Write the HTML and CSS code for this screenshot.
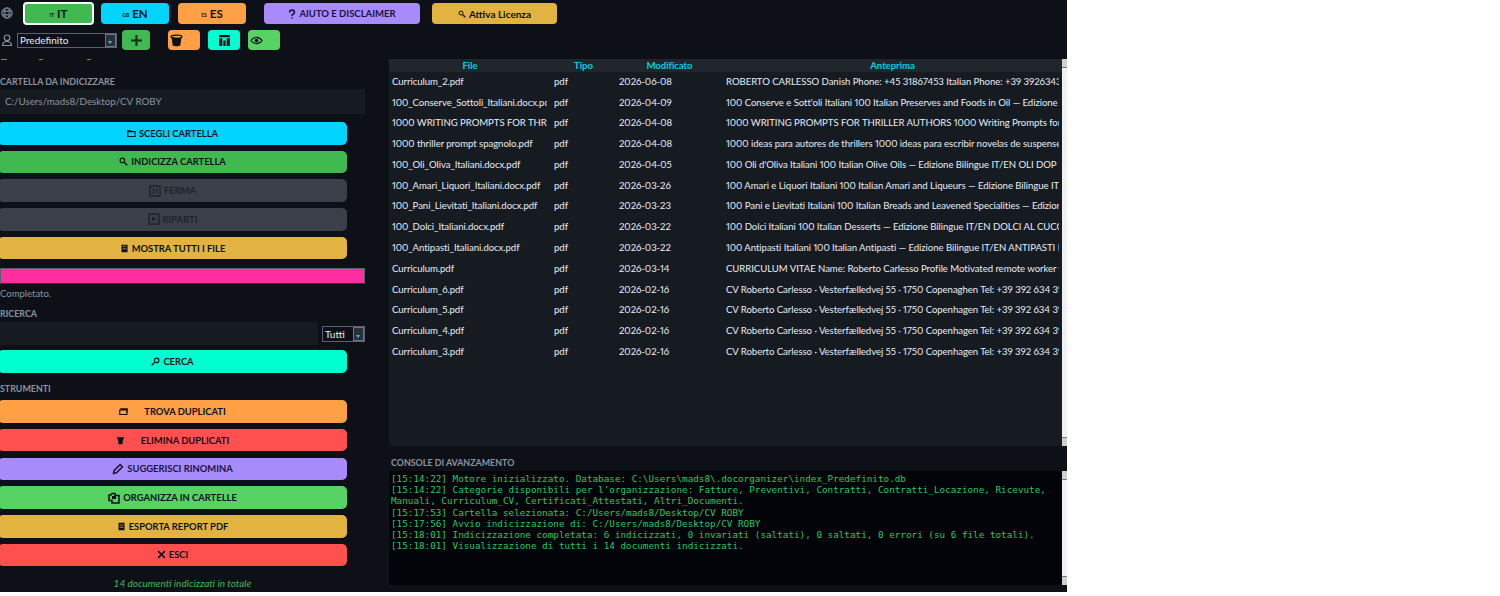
FILE: index.html
```html
<!DOCTYPE html>
<html lang="en">
<head>
    <meta charset="UTF-8">
    <meta name="viewport" content="width=device-width, initial-scale=1.0">
    <title>Doc Organizer</title>
    <link rel="stylesheet" href="styles.css">
</head>
<body>
    <div class="app">
        <div class="langbar">
            <svg class="side-icon globe" viewBox="0 0 12 12"><circle cx="6" cy="6" r="5"/><ellipse cx="6" cy="6" rx="2.4" ry="5"/><path d="M1 4.2h10M1 7.8h10"/></svg>
            <button class="top-btn lang active"><small>IT</small> IT</button>
            <button class="top-btn lang cyan en"><small>GB</small> EN</button>
            <button class="top-btn lang orange es"><small>ES</small> ES</button>
            <button class="top-btn purple help"><svg class="ico" viewBox="0 0 10 12"><path class="thick" d="M2 4c0-4 6-4 6 0 0 2-3 2-3 4.500"/><path class="thick" d="M5 10v1.500"/></svg> AIUTO E DISCLAIMER</button>
            <button class="top-btn yellow license"><svg class="ico" viewBox="0 0 12 12"><circle cx="4.500" cy="4.500" r="3"/><path class="thick" d="M7 7l4 4"/></svg> Attiva Licenza</button>
        </div>

        <div class="profilebar">
            <svg class="side-icon" viewBox="0 0 12 12"><circle cx="6" cy="3.800" r="2.800"/><path d="M1.500 11.500c0-3 2-4 4.500-4s4.500 1 4.500 4z"/></svg>
            <div class="select profile"><span>Predefinito</span><i></i></div>
            <button class="tool-btn green add"><svg viewBox="0 0 12 12"><path class="thick" d="M6 1v10M1 6h10"/></svg></button>
            <button class="tool-btn orange trash"><svg viewBox="0 0 12 12"><ellipse cx="6" cy="2.500" rx="5" ry="1.500"/><path class="fill" d="M1.500 3.500h9l-1 7c-1 1-6 1-7 0z"/></svg></button>
            <button class="tool-btn teal chart"><svg viewBox="0 0 12 12"><path class="fill" d="M1 1h10v2h-10zM1 4h3v7h-3zM5 6h2v5h-2zM8 4h3v7h-3z"/></svg></button>
            <button class="tool-btn green2 eye"><svg viewBox="0 0 14 10"><path d="M1 5c3-4.500 9-4.500 12 0-3 4.500-9 4.500-12 0z"/><circle class="fill" cx="7" cy="5" r="2"/></svg></button>
        </div>

        <div class="main">
            <div class="sidebar">
                <div class="dashes"><i></i><i></i><i></i></div>
                <h4 class="first">CARTELLA DA INDICIZZARE</h4>
                <div class="field path">C:/Users/mads8/Desktop/CV ROBY</div>

                <div class="actions folder-actions">
                    <button class="btn cyan"><svg class="ico" viewBox="0 0 12 10"><path d="M1 2.500h10v6.500h-10zM1 2.500v-1h4v1"/></svg> SCEGLI CARTELLA</button>
                    <button class="btn green"><svg class="ico" viewBox="0 0 12 12"><circle cx="4.500" cy="4.500" r="3"/><path class="thick" d="M7 7l4 4"/></svg> INDICIZZA CARTELLA</button>
                    <button class="btn off"><svg class="ico big" viewBox="0 0 12 12"><path d="M1 1h10v10h-10zM4.500 3.500v5M7.500 3.500v5"/></svg> FERMA</button>
                    <button class="btn off"><svg class="ico big" viewBox="0 0 12 12"><path d="M1 1h10v10h-10z"/><path class="fill" d="M4 3.500l4.500 2.500-4.500 2.500z"/></svg> RIPARTI</button>
                    <button class="btn yellow"><svg class="ico" viewBox="0 0 10 12"><path class="fill" d="M1 1h8v10h-8z"/><path class="light" d="M3 3h4M2.500 6.500h5"/></svg> MOSTRA TUTTI I FILE</button>
                </div>

                <div class="progress"></div>
                <p class="status">Completato.</p>

                <h4 class="search-title">RICERCA</h4>
                <div class="search-row">
                    <div class="field search"></div>
                    <div class="select filter"><span>Tutti</span><i></i></div>
                </div>
                <button class="btn teal single"><svg class="ico" viewBox="0 0 12 12"><circle cx="7.500" cy="4.500" r="3"/><path class="thick" d="M5 7l-4 4"/></svg> CERCA</button>

                <h4 class="tools-title">STRUMENTI</h4>
                <div class="actions">
                    <button class="btn orange wide"><svg class="ico" viewBox="0 0 12 10"><path d="M1 3h9.500v6h-9.500zM2.500 3v-1.500h8.500v5"/></svg> <span>TROVA DUPLICATI</span></button>
                    <button class="btn red wide"><svg class="ico" viewBox="0 0 12 12"><path class="fill" d="M1.500 1.500h9v2.500h-1l-1 7h-5l-1-7h-1z"/></svg> <span>ELIMINA DUPLICATI</span></button>
                    <button class="btn purple violet-text"><svg class="ico big" viewBox="0 0 12 12"><path d="M1.500 10.500l.7-3 6-6 2.300 2.300-6 6z"/></svg> SUGGERISCI RINOMINA</button>
                    <button class="btn green2"><svg class="ico big" viewBox="0 0 12 12"><path d="M1 3h2l1-1.500h3v2h4v7.500h-7v-2.500h-3z"/><path class="fill" d="M4 4h4v3h-4z"/></svg> ORGANIZZA IN CARTELLE</button>
                    <button class="btn yellow"><svg class="ico" viewBox="0 0 10 12"><path class="fill" d="M1 1h8v10h-8z"/><path class="light" d="M2.500 4h5M2.500 7h5"/></svg> ESPORTA REPORT PDF</button>
                    <button class="btn red"><svg class="ico" viewBox="0 0 12 12"><path class="thick" d="M1.500 1.500l9 9M10.500 1.500l-9 9"/></svg> ESCI</button>
                </div>
                <p class="total">14 documenti indicizzati in totale</p>
            </div>

            <div class="content">
                <div class="table-wrap">
                    <div class="table-scroll">
                        <table>
                            <colgroup><col class="c-file"><col class="c-type"><col class="c-date"><col></colgroup>
                            <thead>
                                <tr><th>File</th><th>Tipo</th><th>Modificato</th><th>Anteprima</th></tr>
                            </thead>
                            <tbody>
                                <tr><td><div>Curriculum_2.pdf</div></td><td>pdf</td><td>2026-06-08</td><td><div>ROBERTO CARLESSO Danish Phone: +45 31867453 Italian Phone: +39 392634391</div></td></tr>
                                <tr><td><div>100_Conserve_Sottoli_Italiani.docx.pdf</div></td><td>pdf</td><td>2026-04-09</td><td><div>100 Conserve e Sott'oli Italiani 100 Italian Preserves and Foods in Oil — Edizione Bilingue</div></td></tr>
                                <tr><td><div>1000 WRITING PROMPTS FOR THRILLER</div></td><td>pdf</td><td>2026-04-08</td><td><div>1000 WRITING PROMPTS FOR THRILLER AUTHORS 1000 Writing Prompts for Thriller</div></td></tr>
                                <tr><td><div>1000 thriller prompt spagnolo.pdf</div></td><td>pdf</td><td>2026-04-08</td><td><div>1000 ideas para autores de thrillers 1000 ideas para escribir novelas de suspense</div></td></tr>
                                <tr><td><div>100_Oli_Oliva_Italiani.docx.pdf</div></td><td>pdf</td><td>2026-04-05</td><td><div>100 Oli d'Oliva Italiani 100 Italian Olive Oils — Edizione Bilingue IT/EN OLI DOP IGP</div></td></tr>
                                <tr><td><div>100_Amari_Liquori_Italiani.docx.pdf</div></td><td>pdf</td><td>2026-03-26</td><td><div>100 Amari e Liquori Italiani 100 Italian Amari and Liqueurs — Edizione Bilingue IT/EN</div></td></tr>
                                <tr><td><div>100_Pani_Lievitati_Italiani.docx.pdf</div></td><td>pdf</td><td>2026-03-23</td><td><div>100 Pani e Lievitati Italiani 100 Italian Breads and Leavened Specialities — Edizione</div></td></tr>
                                <tr><td><div>100_Dolci_Italiani.docx.pdf</div></td><td>pdf</td><td>2026-03-22</td><td><div>100 Dolci Italiani 100 Italian Desserts — Edizione Bilingue IT/EN DOLCI AL CUCCHIAIO</div></td></tr>
                                <tr><td><div>100_Antipasti_Italiani.docx.pdf</div></td><td>pdf</td><td>2026-03-22</td><td><div>100 Antipasti Italiani 100 Italian Antipasti — Edizione Bilingue IT/EN ANTIPASTI DI</div></td></tr>
                                <tr><td><div>Curriculum.pdf</div></td><td>pdf</td><td>2026-03-14</td><td><div>CURRICULUM VITAE Name: Roberto Carlesso Profile Motivated remote worker with</div></td></tr>
                                <tr><td><div>Curriculum_6.pdf</div></td><td>pdf</td><td>2026-02-16</td><td><div>CV Roberto Carlesso · Vesterfælledvej 55 · 1750 Copenaghen Tel: +39 392 634 391</div></td></tr>
                                <tr><td><div>Curriculum_5.pdf</div></td><td>pdf</td><td>2026-02-16</td><td><div>CV Roberto Carlesso · Vesterfælledvej 55 · 1750 Copenhagen Tel: +39 392 634 391</div></td></tr>
                                <tr><td><div>Curriculum_4.pdf</div></td><td>pdf</td><td>2026-02-16</td><td><div>CV Roberto Carlesso · Vesterfælledvej 55 · 1750 Copenhagen Tel: +39 392 634 391</div></td></tr>
                                <tr><td><div>Curriculum_3.pdf</div></td><td>pdf</td><td>2026-02-16</td><td><div>CV Roberto Carlesso · Vesterfælledvej 55 · 1750 Copenhagen Tel: +39 392 634 391</div></td></tr>
                            </tbody>
                        </table>
                    </div>
                    <div class="scrollbar"><b></b><u></u><b></b></div>
                </div>

                <h4 class="console-title">CONSOLE DI AVANZAMENTO</h4>
                <div class="console-wrap">
                    <pre class="console">[15:14:22] Motore inizializzato. Database: C:\Users\mads8\.docorganizer\index_Predefinito.db
[15:14:22] Categorie disponibili per l'organizzazione: Fatture, Preventivi, Contratti, Contratti_Locazione, Ricevute,
Manuali, Curriculum_CV, Certificati_Attestati, Altri_Documenti.
[15:17:53] Cartella selezionata: C:/Users/mads8/Desktop/CV ROBY
[15:17:56] Avvio indicizzazione di: C:/Users/mads8/Desktop/CV ROBY
[15:18:01] Indicizzazione completata: 6 indicizzati, 0 invariati (saltati), 0 saltati, 0 errori (su 6 file totali).
[15:18:01] Visualizzazione di tutti i 14 documenti indicizzati.</pre>
                    <div class="scrollbar"><b></b><u></u><b></b></div>
                </div>
            </div>
        </div>
    </div>
</body>
</html>
```

FILE: styles.css
```css
* {
    box-sizing: border-box;
}
body {
    margin: 0;
    background: white;
    font-family: 'Lato', sans-serif;
    font-size: 10px;
    color: #c9d1d9;
}
button {
    font-family: inherit;
    cursor: pointer;
}
.app {
    width: 1067px;
    height: 592px;
    background: #0d1017;
    overflow: hidden;
    display: flex;
    flex-direction: column;
}

/* svg icons */
svg {
    fill: none;
    stroke: currentColor;
    stroke-width: 1.2;
    display: block;
    flex: none;
}
svg .thick {
    stroke-width: 2;
}
svg .fill {
    fill: currentColor;
    stroke: none;
}
svg .light {
    stroke: #e3b341;
    stroke-width: 1;
}
.ico {
    width: 9px;
    height: 9px;
    stroke-width: 1.5;
}
.ico.big {
    width: 12px;
    height: 12px;
}
.side-icon {
    width: 12px;
    height: 12px;
    color: #8b949e;
    margin-left: 1px;
}
.side-icon.globe {
    color: #6b7280;
    stroke-width: 1.6;
}

/* colours */
.cyan { background: #00d4ff; }
.green { background: #3fb950; }
.green2 { background: #56d364; }
.orange { background: #ffa044; }
.purple { background: #a78bfa; }
.yellow { background: #e3b341; }
.teal { background: #00ffd0; }
.red { background: #ff5050; }

/* top rows */
.langbar {
    height: 28px;
    padding-top: 3px;
    display: flex;
    align-items: flex-start;
}
.langbar .side-icon {
    margin-top: 4px;
}
.top-btn {
    height: 21px;
    border: none;
    border-radius: 4px;
    color: #0d1117;
    font-size: 9.500px;
    font-weight: 700;
    display: flex;
    align-items: center;
    justify-content: center;
    gap: 3px;
    padding: 0;
}
.top-btn small {
    font-size: 5px;
    margin-top: 3px;
}
.lang {
    width: 68px;
    font-size: 11.500px;
}
.lang.active {
    width: 71px;
    height: 23px;
    margin: -1px 0 0 10px;
    background: #3fb950;
    border: 2px solid #fff;
}
.en {
    margin-left: 7px;
}
.es {
    margin-left: 9px;
}
.help {
    width: 156px;
    margin-left: 18px;
    color: #1a1240;
}
.license {
    width: 125px;
    margin-left: 12px;
    font-size: 10px;
}
.help .ico, .license .ico {
    width: 8px;
    height: 10px;
}

.profilebar {
    height: 24px;
    display: flex;
    align-items: center;
}
.select {
    height: 15px;
    background: #0d1117;
    border: 1px solid #5a6270;
    color: #e6edf3;
    font-size: 10px;
    display: flex;
    align-items: center;
    justify-content: space-between;
    padding-left: 2px;
    line-height: 1;
}
.select i {
    width: 11px;
    height: 13px;
    background: #2a303a;
    border: 1px solid #6b7280;
    position: relative;
    flex: none;
}
.select i::after {
    content: '';
    position: absolute;
    left: 2px;
    bottom: 2px;
    border-left: 2.500px solid transparent;
    border-right: 2.500px solid transparent;
    border-top: 3px solid #00d4ff;
}
.profile {
    width: 100px;
    margin-left: 4px;
}
.tool-btn {
    height: 20px;
    border: none;
    border-radius: 4px;
    color: #0d1117;
    padding: 0;
    display: flex;
    align-items: center;
    justify-content: center;
}
.tool-btn svg {
    width: 13px;
    height: 13px;
}
.add {
    width: 28px;
    margin-left: 5px;
}
.add svg {
    color: #10321a;
}
.trash {
    width: 32px;
    margin-left: 18px;
    justify-content: flex-start;
    padding-left: 2px;
}
.chart {
    width: 32px;
    margin-left: 8px;
}
.eye {
    width: 32px;
    margin-left: 8px;
    justify-content: flex-start;
    padding-left: 2px;
}

.main {
    flex: 1;
    min-height: 0;
    display: flex;
    align-items: flex-start;
}

/* left column */
.sidebar {
    width: 389px;
    height: 535px;
    flex: none;
    overflow: hidden;
    padding-right: 24px;
}
.dashes {
    height: 1px;
    margin-top: 7px;
    display: flex;
}
.dashes i {
    height: 1px;
    width: 6px;
    background: #a07a40;
    margin-left: 1px;
}
.dashes i:nth-child(2) {
    width: 4px;
    margin-left: 32px;
}
.dashes i:nth-child(3) {
    width: 4px;
    margin-left: 44px;
}
h4 {
    margin: 0;
    font-size: 8.900px;
    font-weight: 700;
    color: #8b949e;
    line-height: 12px;
}
h4.first {
    margin-top: 16px;
}
.field {
    background: #161b22;
    color: #8b949e;
    height: 25px;
    line-height: 25px;
    padding-left: 5px;
    font-size: 9.800px;
}
.path {
    margin-top: 1px;
}
.actions {
    display: flex;
    flex-direction: column;
    gap: 6.200px;
    width: 349px;
    margin-left: -2px;
}
.folder-actions {
    margin-top: 8px;
}
.btn {
    height: 22.500px;
    border: none;
    border-radius: 5px;
    font-size: 9.400px;
    font-weight: 700;
    color: #0d1117;
    display: flex;
    align-items: center;
    justify-content: center;
    gap: 3px;
    padding: 0;
}
.btn.wide {
    gap: 16px;
}
.btn.off {
    background: #3a3f4a;
    color: #1f232b;
}
.btn.violet-text {
    color: #1a1240;
}
.progress {
    height: 16px;
    margin-top: 9px;
    background: #ff2e9f;
    border: 1px solid #5a6270;
    border-bottom-color: #30363d;
}
.status {
    margin: 4px 0 0;
    font-size: 9.500px;
    line-height: 12px;
    color: #8b949e;
}
.search-title {
    margin-top: 8px;
}
.search-row {
    display: flex;
    align-items: center;
    margin-top: 2px;
}
.search {
    width: 318px;
    height: 23px;
}
.filter {
    width: 43px;
    margin-left: 4px;
    height: 16px;
}
.filter i {
    height: 14px;
}
.single {
    width: 349px;
    height: 23px;
    margin: 5px 0 0 -2px;
}
.tools-title {
    margin-top: 10px;
    margin-bottom: 5px;
}
.total {
    margin: 11px 0 0;
    width: 365px;
    text-align: center;
    font-size: 10px;
    line-height: 12px;
    font-style: italic;
    color: #3fb950;
}

/* right column */
.content {
    width: 678px;
    flex: none;
    display: flex;
    flex-direction: column;
    padding-top: 7px;
}
.table-wrap {
    height: 387px;
    display: flex;
    background: #161b22;
}
.table-scroll {
    flex: 1;
    min-width: 0;
    overflow: hidden;
}
table {
    width: 673px;
    table-layout: fixed;
    border-collapse: collapse;
    color: #e6edf3;
    font-size: 9.600px;
    letter-spacing: -0.060px;
    font-feature-settings: "pnum";
}
.c-file { width: 162px; }
.c-type { width: 65px; }
.c-date { width: 107px; }
th {
    background: #21262d;
    color: #00d0e0;
    font-size: 9.600px;
    font-weight: 700;
    height: 13px;
    line-height: 13px;
    padding: 0;
}
td {
    height: 20.770px;
    padding: 0 3px 0 3px;
    white-space: nowrap;
}
tbody tr:first-child td {
    height: 19.770px;
}
td:first-child {
    padding-right: 4px;
}
td div {
    overflow: hidden;
}
.scrollbar {
    width: 5px;
    flex: none;
    background: #e8e8e8;
    display: flex;
    flex-direction: column;
    justify-content: space-between;
}
.scrollbar b {
    height: 9px;
    background: #d0d0d0;
    border-bottom: 1px solid #777;
}
.scrollbar b:last-child {
    border-bottom: none;
    border-top: 1px solid #777;
}
.scrollbar u {
    flex: 1;
    background: #f0f0f0;
}
.console-title {
    margin: 11px 0 0 2px;
}
.console-wrap {
    height: 114px;
    margin-top: 2px;
    display: flex;
    background: #02040a;
}
.console {
    flex: 1;
    min-width: 0;
    margin: 0;
    padding: 2px 0 0 2px;
    font-family: 'DejaVu Sans Mono', monospace;
    font-size: 9.300px;
    line-height: 11.200px;
    color: #26c765;
    overflow: hidden;
}
```
